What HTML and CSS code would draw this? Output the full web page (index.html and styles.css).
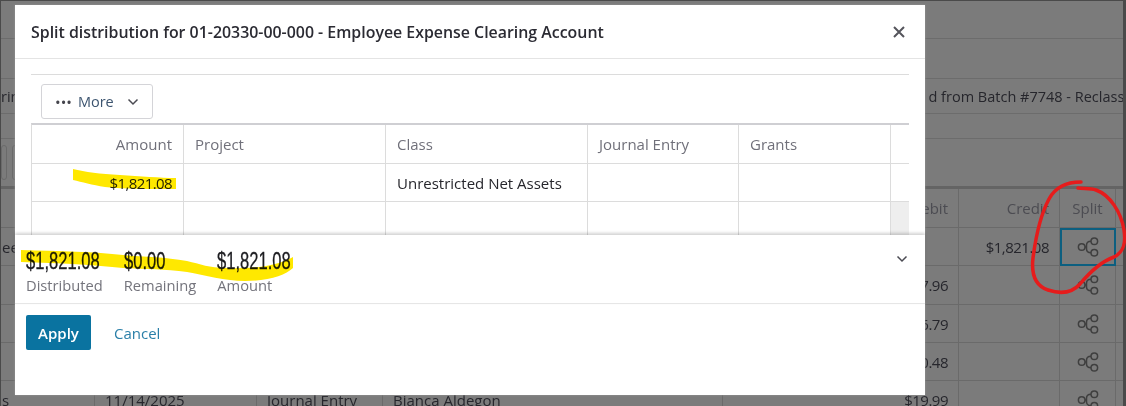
FILE: index.html
```html
<!DOCTYPE html>
<html lang="en">

<head>
    <meta charset="UTF-8">
    <title>Split distribution</title>
    <link rel="stylesheet" href="styles.css">
</head>

<body>
    <svg width="0" height="0" class="defs">
        <symbol id="split" viewBox="0 0 24 24">
            <circle cx="5.700" cy="12" r="3.300"></circle>
            <circle cx="18.300" cy="6.300" r="3.300"></circle>
            <circle cx="18.300" cy="17.700" r="3.300"></circle>
            <path d="M9 12h2M15 6.300c-3 0-4.500 1.500-4.500 4v3.400c0 2.500 1.500 4 4.500 4"></path>
        </symbol>
    </svg>

    <!-- page behind the dialog -->
    <div class="page">
        <div class="band band-a"></div>
        <div class="band band-b"></div>
        <div class="band band-c">
            <span>rin</span>
            <span class="desc">d from Batch #7748 - Reclass</span>
        </div>
        <div class="band band-d"></div>
        <div class="band band-e">
            <i class="tool"></i>
            <i class="tool"></i>
        </div>

        <div class="lines">
            <div class="cell"></div><div class="cell"></div><div class="cell"></div><div class="cell"></div>
            <div class="cell num head">Debit</div>
            <div class="cell num head">Credit</div>
            <div class="cell mid head">Split</div>
            <div class="cell end"></div>

            <div class="cell first">ee</div><div class="cell"></div><div class="cell"></div><div class="cell"></div>
            <div class="cell"></div>
            <div class="cell num">$1,821.08</div>
            <div class="cell mid selected"><svg class="ico"><use href="#split"></use></svg></div>
            <div class="cell end"></div>

            <div class="cell"></div><div class="cell"></div><div class="cell"></div><div class="cell"></div>
            <div class="cell num">$47.96</div>
            <div class="cell"></div>
            <div class="cell mid"><svg class="ico"><use href="#split"></use></svg></div>
            <div class="cell end"></div>

            <div class="cell"></div><div class="cell"></div><div class="cell"></div><div class="cell"></div>
            <div class="cell num">$16.79</div>
            <div class="cell"></div>
            <div class="cell mid"><svg class="ico"><use href="#split"></use></svg></div>
            <div class="cell end"></div>

            <div class="cell"></div><div class="cell"></div><div class="cell"></div><div class="cell"></div>
            <div class="cell num">$10.48</div>
            <div class="cell"></div>
            <div class="cell mid"><svg class="ico"><use href="#split"></use></svg></div>
            <div class="cell end"></div>

            <div class="cell first">s</div>
            <div class="cell">11/14/2025</div>
            <div class="cell">Journal Entry</div>
            <div class="cell">Bianca Aldegon</div>
            <div class="cell num">$19.99</div>
            <div class="cell"></div>
            <div class="cell mid"><svg class="ico"><use href="#split"></use></svg></div>
            <div class="cell end"></div>
        </div>
    </div>

    <!-- dialog -->
    <div class="modal">
        <div class="modal-head">
            <h2>Split distribution for 01-20330-00-000 - Employee Expense Clearing Account</h2>
            <svg class="close" viewBox="0 0 12 12"><path d="M1 1l10 10M11 1l-10 10"></path></svg>
        </div>

        <div class="modal-body">
            <div class="toolbar">
                <button class="more">
                    <span class="dots">•••</span> More
                    <svg class="chev" viewBox="0 0 12 8"><path d="M1.500 1.500l4.500 4.500l4.500-4.500"></path></svg>
                </button>
            </div>

            <div class="grid">
                <div class="g num label">Amount</div>
                <div class="g label">Project</div>
                <div class="g label">Class</div>
                <div class="g label">Journal Entry</div>
                <div class="g label">Grants</div>
                <div class="g last"></div>

                <div class="g num money">$1,821.08</div>
                <div class="g"></div>
                <div class="g">Unrestricted Net Assets</div>
                <div class="g"></div>
                <div class="g"></div>
                <div class="g last"></div>

                <div class="g"></div>
                <div class="g"></div>
                <div class="g"></div>
                <div class="g"></div>
                <div class="g"></div>
                <div class="g last scroll"></div>
            </div>
        </div>

        <div class="totals">
            <div class="total">
                <strong>$1,821.08</strong>
                <span>Distributed</span>
            </div>
            <div class="total">
                <strong>$0.00</strong>
                <span>Remaining</span>
            </div>
            <div class="total">
                <strong>$1,821.08</strong>
                <span>Amount</span>
            </div>
            <svg class="chev totals-chev" viewBox="0 0 12 8"><path d="M1.500 1.500l4.500 4.500l4.500-4.500"></path></svg>
        </div>

        <div class="actions">
            <button class="btn">Apply</button>
            <a class="cancel">Cancel</a>
        </div>
    </div>

    <!-- marker scribbles drawn on the screenshot -->
    <svg class="marks highlighter" width="1126" height="406" viewBox="0 0 1126 406">
        <path d="M73 169C85 172 100 174 120 175C140 176 160 178 176 178L176 189C150 189 125 189 105 187C92 185 82 182 73 180Z"></path>
        <path d="M21 250C60 251 95 252 123 255C145 257 165 257 187 261C200 264 210 268 225 268C250 269 275 267 293 257L293 268C285 275 270 281 245 281C225 281 205 275 187 272C165 269 145 269 123 268C95 265 60 263 21 262Z"></path>
    </svg>
    <svg class="marks" width="1126" height="406" viewBox="0 0 1126 406">
        <path class="red" d="M1081 182C1068 182 1056 186 1049 199C1042 212 1036 235 1033 258C1031 275 1036 286 1048 290C1060 294 1072 293 1080 284C1090 272 1100 262 1114 257C1124 252 1126 243 1124 230C1121 212 1110 195 1096 190C1090 188 1083 189 1078 188"></path>
    </svg>
</body>

</html>
```

FILE: styles.css
```css
* {
    margin: 0;
    padding: 0;
    box-sizing: border-box;
}

html,
body {
    height: 100%;
}

body {
    position: relative;
    overflow: hidden;
    background-color: #7b7b7b;
    font-family: "Open Sans", "Noto Sans", sans-serif;
    font-size: 15px;
    color: #26262c;
}

.defs {
    position: absolute;
}

/* page behind the dialog */
.page {
    height: 406px;
    border: solid #4a4a4a;
    border-width: 1px 3px 0 1px;
    overflow: hidden;
}

.band {
    display: flex;
    align-items: center;
    border-bottom: 1px solid #6c6c6c;
}

.band-a {
    height: 38px;
}

.band-b {
    height: 40px;
}

.band-c {
    height: 35px;
    white-space: nowrap;
    font-size: 14.500px;
}

.band-c .desc {
    margin-left: 909px;
}

.band-d {
    height: 25px;
}

.band-e {
    height: 50px;
    gap: 5px;
    border-bottom: 3px solid #646464;
}

.tool {
    width: 6px;
    height: 35px;
    border: 1px solid #6a6a6a;
    border-radius: 3px;
}

.lines {
    display: grid;
    grid-template-columns: 94px 162px 126px 340px 236px 101px 56px 7px;
    grid-template-rows: 39px 38px 39px 38px 38px 38px;
}

.cell {
    display: flex;
    align-items: center;
    padding: 0 10px;
    border-right: 1px solid #6a6a6a;
    border-bottom: 1px solid #6a6a6a;
    white-space: nowrap;
}

.cell.first {
    padding-left: 1px;
}

.cell.head {
    color: #4c4c52;
}

.cell.num {
    justify-content: flex-end;
    letter-spacing: -0.500px;
}

.cell.head.num {
    letter-spacing: 0;
}

.cell.mid {
    justify-content: center;
    padding: 0;
}

.cell.end {
    border-right: 0;
}

.cell.selected {
    border: 2px solid #0c5f80;
}

.ico {
    width: 24px;
    height: 24px;
    fill: none;
    stroke: #3f3f3f;
    stroke-width: 1.500;
}

/* dialog */
.modal {
    position: absolute;
    top: 5px;
    left: 15px;
    width: 910px;
    height: 390px;
    display: flex;
    flex-direction: column;
    background-color: #fff;
    box-shadow: 0 0 2px #999;
}

.modal-head {
    display: flex;
    align-items: center;
    justify-content: space-between;
    height: 54px;
    padding: 0 20px 0 16px;
    border-bottom: 1px solid #e4e4e4;
}

.modal-head h2 {
    font-size: 15.900px;
    font-weight: 600;
    color: #2b2b33;
}

.close {
    width: 12px;
    height: 12px;
    fill: none;
    stroke: #55555c;
    stroke-width: 2;
}

.modal-body {
    height: 161px;
    margin: 15px 16px 0;
    border-top: 1px solid #dcdcdc;
    overflow: hidden;
}

.toolbar {
    padding: 9px 0 4px 10px;
}

.more {
    display: flex;
    align-items: center;
    gap: 6px;
    width: 112px;
    height: 35px;
    padding-left: 13px;
    border: 1px solid #d4d4d8;
    border-radius: 3px;
    background-color: #fff;
    font: inherit;
    font-size: 14.500px;
    color: #3d5570;
}

.dots {
    font-size: 15px;
    letter-spacing: 0;
    color: #44444c;
}

.chev {
    width: 12px;
    height: 8px;
    fill: none;
    stroke: #4a4a52;
    stroke-width: 1.500;
}

.more .chev {
    margin-left: 7px;
}

.grid {
    display: grid;
    grid-template-columns: 152px 202px 202px 151px 152px 19px;
    grid-template-rows: 39px 38px 38px;
    border-top: 2px solid #cfcfd3;
    border-left: 1px solid #dcdcdc;
}

.g {
    display: flex;
    align-items: center;
    padding: 0 11px;
    border-right: 1px solid #dcdcdc;
    border-bottom: 1px solid #dcdcdc;
    white-space: nowrap;
}

.g.num {
    justify-content: flex-end;
}

.g.money {
    letter-spacing: -0.600px;
}

.g.label {
    color: #70707a;
}

.g.last {
    border-right: 0;
}

.g.scroll {
    background-color: #eee;
}

.totals {
    position: relative;
    z-index: 1;
    display: flex;
    gap: 21px;
    height: 69px;
    padding: 12px 0 0 11px;
    border-bottom: 1px solid #e6e6e6;
    background-color: #fff;
    box-shadow: 0 -2px 3px rgba(0, 0, 0, 0.18);
}

.total {
    display: flex;
    flex-direction: column;
}

/* no narrow face installed, so the figures are squeezed */
.total strong {
    width: 0;
    font-family: "Liberation Sans", sans-serif;
    font-size: 23px;
    font-weight: 400;
    line-height: 28px;
    white-space: nowrap;
    color: #1c1c20;
    -webkit-text-stroke: 0.300px #1c1c20;
    transform: scaleX(0.720);
    transform-origin: left;
}

.total span {
    font-size: 14.700px;
    line-height: 20px;
    color: #74747c;
}

.totals-chev {
    margin: 8px 17px 0 auto;
}

.actions {
    display: flex;
    align-items: center;
    gap: 23px;
    padding: 11px;
}

.btn {
    width: 65px;
    height: 35px;
    border: 0;
    border-radius: 2px;
    background-color: #0a73a0;
    font: inherit;
    font-weight: 600;
    color: #fff;
}

.cancel {
    color: #2a7fa8;
}

/* marker scribbles */
.marks {
    position: absolute;
    top: 0;
    left: 0;
    fill: none;
    pointer-events: none;
}

.highlighter {
    z-index: 2;
    fill: #ffe800;
    mix-blend-mode: multiply;
}

.red {
    stroke: #e61c1c;
    stroke-width: 3.500;
    stroke-linecap: round;
}
```
